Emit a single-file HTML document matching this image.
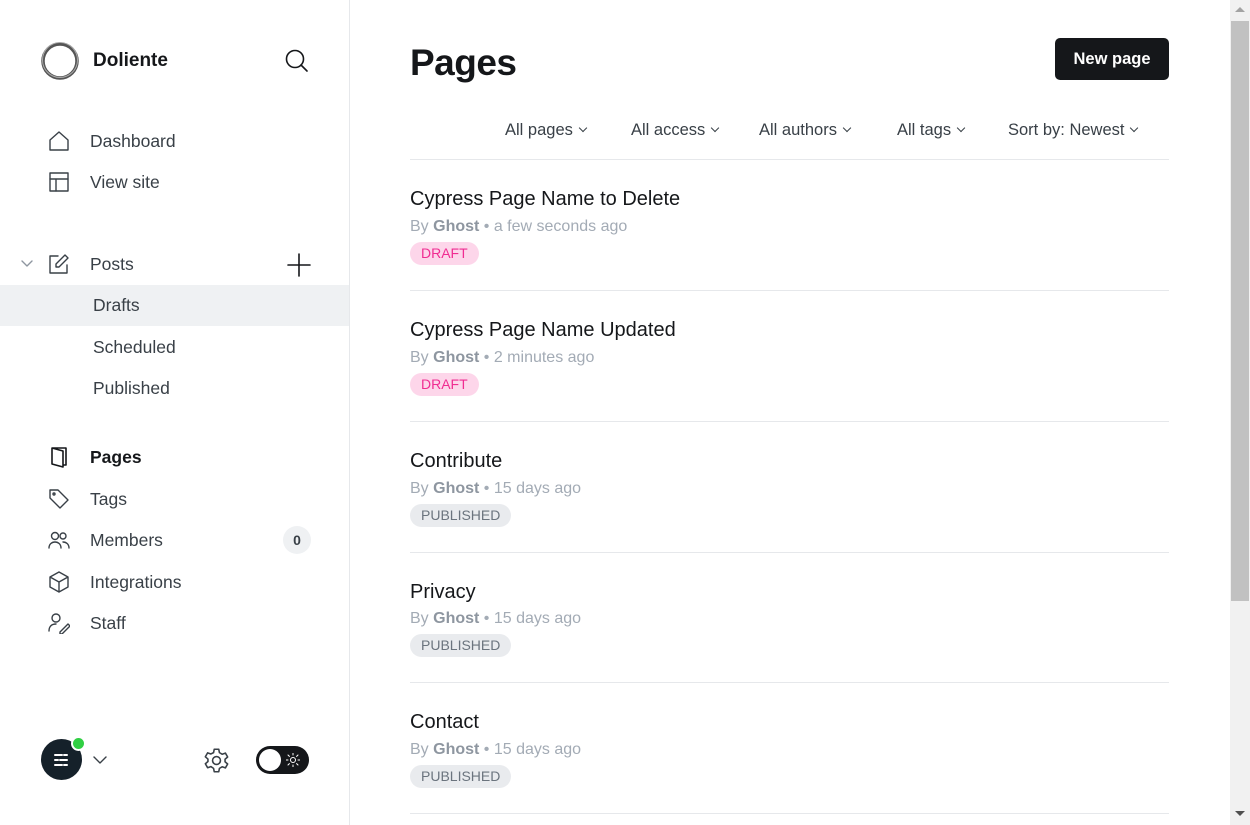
<!DOCTYPE html>
<html><head><meta charset="utf-8"><style>
*{box-sizing:border-box;margin:0;padding:0}
body{width:1250px;height:825px;overflow:hidden;font-family:"Liberation Sans",sans-serif;background:#fff;position:relative;color:#15171a}
.side{position:absolute;left:0;top:0;width:350px;height:825px;border-right:1px solid #e6e8eb;background:#fff}
.abs{position:absolute}
.nav{position:absolute;left:90px;font-size:17.5px;color:#394047}
.ic{position:absolute;left:48px;width:22px;height:22px}
svg{fill:none;stroke:#394047;stroke-width:1.4;stroke-linecap:round;stroke-linejoin:round}
.item{position:absolute;left:410px;width:759px;border-bottom:1px solid #e6e8eb;height:131px}
.t{position:absolute;left:0;font-size:20px;color:#15171a}
.m{position:absolute;left:0;font-size:16px;color:#a3abb5}
.m b{color:#8e96a0}
.bd{position:absolute;left:0;height:23px;border-radius:12px;font-size:14px;line-height:23px;padding:0 11px}
.dr{background:#fdd6ea;color:#f02d92}
.pb{background:#e9ebee;color:#6b747e}
.f{position:absolute;top:121px;font-size:16.5px;color:#394047}
.f:after{content:"";display:inline-block;width:5px;height:5px;border-right:1.2px solid #394047;border-bottom:1.2px solid #394047;transform:rotate(45deg);margin-left:7px;position:relative;top:-4px}
</style></head><body>
<div class="side">
 <svg class="abs" style="left:40px;top:41px;width:40px;height:40px" viewBox="0 0 40 40"><circle cx="20" cy="20" r="17" stroke="#555" stroke-width="3.5"/><circle cx="20" cy="19" r="17.5" stroke="#aaa" stroke-width="1"/></svg>
 <div class="abs" style="left:93px;top:50px;font-size:19px;font-weight:bold">Doliente</div>
 <svg class="abs" style="left:284px;top:48px;width:26px;height:26px" viewBox="0 0 26 26"><circle cx="11" cy="11" r="8.5" stroke="#15171a" stroke-width="1.6"/><path d="M17 17l6 6" stroke="#15171a" stroke-width="1.6"/></svg>
 <svg class="ic" style="top:130px" viewBox="0 0 22 22"><path d="M2 10L11 2l9 8v10H2z"/></svg>
 <div class="nav" style="top:131px">Dashboard</div>
 <svg class="ic" style="top:171px" viewBox="0 0 22 22"><rect x="2" y="2" width="18" height="18"/><path d="M2 8h18M8 8v12"/></svg>
 <div class="nav" style="top:172px">View site</div>
 <svg class="abs" style="left:20px;top:258px;width:14px;height:12px" viewBox="0 0 14 12"><path d="M2 3l5 5 5-5" stroke="#8e96a0"/></svg>
 <svg class="ic" style="top:253px" viewBox="0 0 22 22"><path d="M10 3H2v17h17v-8"/><path d="M17 2l3 3-9 9H8v-3z"/></svg>
 <div class="nav" style="top:254px">Posts</div>
 <svg class="abs" style="left:287px;top:253px;width:24px;height:24px" viewBox="0 0 24 24"><path d="M12 1v22M1 12h22" stroke="#15171a" stroke-width="1.6"/></svg>
 <div class="abs" style="left:0;top:285px;width:349px;height:41px;background:#eff1f3"></div>
 <div class="nav" style="top:295px;left:93px">Drafts</div>
 <div class="nav" style="top:337px;left:93px">Scheduled</div>
 <div class="nav" style="top:378px;left:93px">Published</div>
 <svg class="ic" style="top:446px" viewBox="0 0 22 22"><path d="M4 2h14v17h-3M4 2l11 3v16l-11-3z" stroke="#15171a" stroke-width="1.6"/></svg>
 <div class="nav" style="top:447px;font-weight:bold;color:#15171a">Pages</div>
 <svg class="ic" style="top:488px" viewBox="0 0 22 22"><path d="M2 2h8l10 10-8 8L2 10z"/><circle cx="6" cy="6" r="1"/></svg>
 <div class="nav" style="top:489px">Tags</div>
 <svg class="ic" style="top:529px" viewBox="0 0 22 22"><circle cx="7" cy="7" r="3.5"/><circle cx="15" cy="7" r="3"/><path d="M1 19c0-4 3-6 6-6s6 2 6 6M15 13c3 0 6 2 6 6"/></svg>
 <div class="nav" style="top:530px">Members</div>
 <div class="abs" style="left:283px;top:526px;width:28px;height:28px;border-radius:14px;background:#eff1f3;font-size:14px;font-weight:bold;color:#394047;text-align:center;line-height:28px">0</div>
 <svg class="ic" style="top:571px" viewBox="0 0 22 22"><path d="M11 1l9 5v10l-9 5-9-5V6zM2 6l9 5 9-5M11 11v10"/></svg>
 <div class="nav" style="top:572px">Integrations</div>
 <svg class="ic" style="top:612px" viewBox="0 0 22 22"><circle cx="8" cy="6" r="4"/><path d="M1 19c0-5 3-7 7-7M12 20l8-8 2 2-8 8h-2z"/></svg>
 <div class="nav" style="top:613px">Staff</div>
 <div class="abs" style="left:41px;top:739px;width:41px;height:41px;border-radius:50%;background:#15212a"></div>
 <svg class="abs" style="left:52px;top:751px;width:18px;height:18px" viewBox="0 0 18 18"><path d="M3 4h7M12 4h3M3 9h3M8 9h7M3 14h7M12 14h3" stroke="#fff" stroke-width="2"/></svg>
 <div class="abs" style="left:71px;top:736px;width:15px;height:15px;border-radius:50%;background:#30cf43;border:2px solid #fff"></div>
 <svg class="abs" style="left:92px;top:754px;width:16px;height:12px" viewBox="0 0 16 12"><path d="M2 3l6 6 6-6"/></svg>
 <svg class="abs" style="left:203px;top:747px;width:27px;height:27px" viewBox="0 0 24 24"><circle cx="12" cy="12" r="3.5"/><path d="M10 2h4l.6 3 2.4 1.4 2.9-1 2 3.5-2.3 2v2.2l2.3 2-2 3.5-2.9-1-2.4 1.4-.6 3h-4l-.6-3L7 17.4l-2.9 1-2-3.5 2.3-2v-2.2l-2.3-2 2-3.5 2.9 1L9.4 5z"/></svg>
 <div class="abs" style="left:256px;top:746px;width:53px;height:28px;border-radius:14px;background:#15171a"></div>
 <div class="abs" style="left:259px;top:749px;width:22px;height:22px;border-radius:50%;background:#fff"></div>
 <svg class="abs" style="left:286px;top:753px;width:14px;height:14px" viewBox="0 0 14 14"><circle cx="7" cy="7" r="2.5" stroke="#fff" stroke-width="1"/><path d="M7 0v2M7 12v2M0 7h2M12 7h2M2 2l1.4 1.4M10.6 10.6L12 12M2 12l1.4-1.4M10.6 3.4L12 2" stroke="#fff" stroke-width="1"/></svg>
</div>
<div class="abs" style="left:410px;top:42px;font-size:37px;font-weight:bold;letter-spacing:-0.5px">Pages</div>
<div class="abs" style="left:1055px;top:38px;width:114px;height:42px;border-radius:5px;background:#15171a;color:#fff;font-weight:bold;font-size:16.5px;text-align:center;line-height:42px">New page</div>
<div class="f" style="left:505px">All pages</div>
<div class="f" style="left:631px">All access</div>
<div class="f" style="left:759px">All authors</div>
<div class="f" style="left:897px">All tags</div>
<div class="f" style="left:1008px">Sort by: Newest</div>
<div class="abs" style="left:410px;top:159px;width:759px;height:1px;background:#e6e8eb"></div>
<div class="item" style="top:160px"><div class="t" style="top:28px">Cypress Page Name to Delete</div><div class="m" style="top:58px">By <b>Ghost</b> • a few seconds ago</div><div class="bd dr" style="top:82px">DRAFT</div></div>
<div class="item" style="top:291px"><div class="t" style="top:28px">Cypress Page Name Updated</div><div class="m" style="top:58px">By <b>Ghost</b> • 2 minutes ago</div><div class="bd dr" style="top:82px">DRAFT</div></div>
<div class="item" style="top:422px"><div class="t" style="top:28px">Contribute</div><div class="m" style="top:58px">By <b>Ghost</b> • 15 days ago</div><div class="bd pb" style="top:82px">PUBLISHED</div></div>
<div class="item" style="top:553px;height:130px"><div class="t" style="top:28px">Privacy</div><div class="m" style="top:57px">By <b>Ghost</b> • 15 days ago</div><div class="bd pb" style="top:81px">PUBLISHED</div></div>
<div class="item" style="top:683px"><div class="t" style="top:28px">Contact</div><div class="m" style="top:58px">By <b>Ghost</b> • 15 days ago</div><div class="bd pb" style="top:82px">PUBLISHED</div></div>
<div class="abs" style="left:1230px;top:0;width:20px;height:825px;background:#f1f1f1"></div>
<div class="abs" style="left:1231px;top:21px;width:18px;height:580px;background:#c1c1c1"></div>
<div class="abs" style="left:1235px;top:7px;width:0;height:0;border-left:5px solid transparent;border-right:5px solid transparent;border-bottom:5px solid #a3a3a3"></div>
<div class="abs" style="left:1235px;top:811px;width:0;height:0;border-left:5px solid transparent;border-right:5px solid transparent;border-top:5px solid #505050"></div>
</body></html>
